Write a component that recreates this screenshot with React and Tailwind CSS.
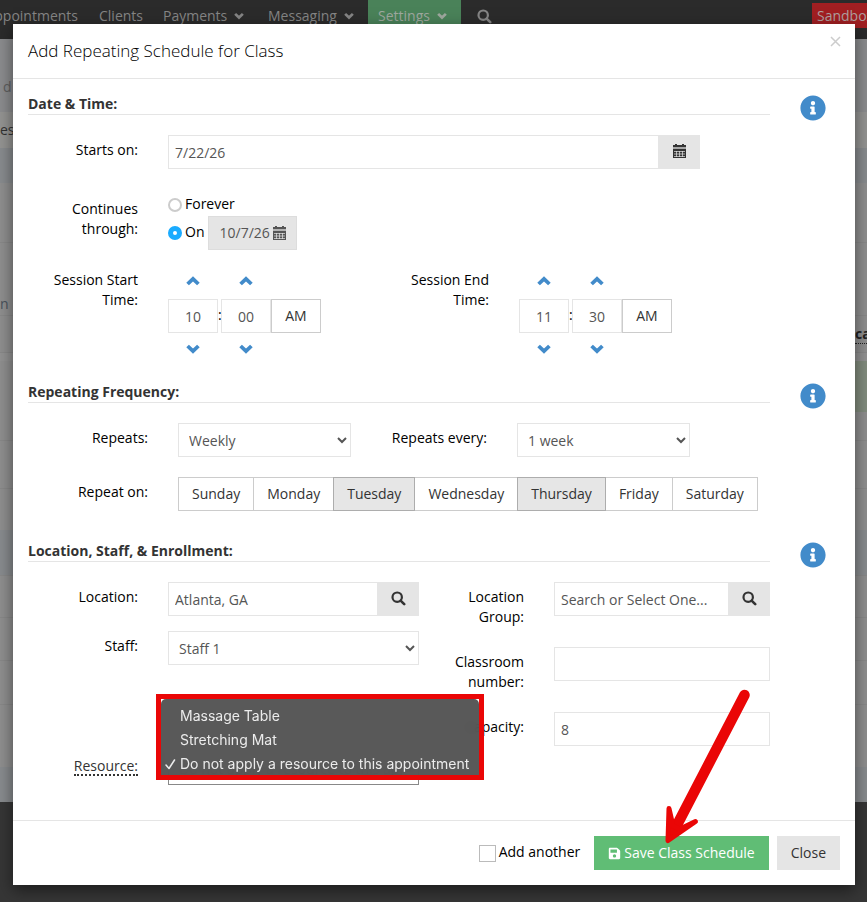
import React, { useState } from 'react';
import { FaInfoCircle, FaSave } from 'react-icons/fa';

const days = ['Sunday', 'Monday', 'Tuesday', 'Wednesday', 'Thursday', 'Friday', 'Saturday'];

// Rows of the page that sits behind the dialog
const pageRows = [
  { height: 'h-[73px]', tone: 'bg-[#8b8c8e]', left: 'd', pad: 'pl-[3px] pt-[22px] text-[#5f5f5f] items-center' },
  { height: 'h-9', tone: 'bg-[#949492]', left: 'es', pad: 'items-center text-[#333]' },
  { height: 'h-[35px]', tone: 'bg-[#888b8e]' },
  { height: 'h-[59px]', tone: 'bg-[#8f8f8f]' },
  { height: 'h-[73px]', tone: 'bg-[#8f8f8f] border-t border-[#888]', left: 'n', pad: 'items-end pb-px text-[#4a535c]' },
  { height: 'h-[37px]', tone: 'bg-[#8f8f8f] border-t border-[#888]', right: 'cat' },
  { height: 'h-[9px]', tone: 'bg-[#929292] border-t border-[#888]' },
  { height: 'h-[51px]', tone: 'bg-[#8f8f8f]', active: true },
  { height: 'h-[28px]', tone: 'bg-[#8f8f8f]' },
  { height: 'h-[48px]', tone: 'bg-[#8f8f8f] border-t border-[#888]' },
  { height: 'h-[42px]', tone: 'bg-[#8f8f8f] border-t border-[#888]' },
  { height: 'h-[45px]', tone: 'bg-[#888b8e]' },
  { height: 'h-[42px]', tone: 'bg-[#8f8f8f] border-t border-[#888]' },
  { height: 'h-[43px]', tone: 'bg-[#8f8f8f] border-t border-[#888]' },
  { height: 'h-[44px]', tone: 'bg-[#8f8f8f] border-t border-[#888]' },
  { height: 'h-[63px]', tone: 'bg-[#8f8f8f] border-t border-[#888]' },
  { height: 'h-[35px]', tone: 'bg-[#888b8e]' }
];

const Chevron = ({ up, className }) => (
  <svg viewBox="0 0 14 10" aria-hidden="true" className={className}>
    <path
      d={up ? 'M1.6 8 L7 2.8 L12.4 8' : 'M1.6 2 L7 7.2 L12.4 2'}
      fill="none"
      stroke="currentColor"
      strokeWidth="3.8"
    />
  </svg>
);

const SearchIcon = () => (
  <svg width="15" height="15" viewBox="0 0 15 15" aria-hidden="true">
    <circle cx="6.2" cy="6.2" r="4.7" fill="none" stroke="currentColor" strokeWidth="2.2" />
    <path d="M9.6 9.6 L13.2 13.2" stroke="currentColor" strokeWidth="2.6" strokeLinecap="round" />
  </svg>
);

const CalendarIcon = () => (
  <svg width="13" height="14" viewBox="0 0 13 14" aria-hidden="true">
    <path d="M0 1 H2 V0 H4 V1 H9 V0 H11 V1 H13 V3 H0 Z M0 5 H13 V14 H0 Z" fill="currentColor" />
    <path d="M0 3 H13 V5 H0 Z" fill="currentColor" opacity="0.35" />
    <path
      d="M1 7.5 H12 M1 10 H12 M1 12.5 H12 M3.5 7 V13 M6.5 7 V13 M9.5 7 V13"
      stroke="#e5e5e5"
      strokeWidth="0.7"
      fill="none"
    />
  </svg>
);

const NavBar = () => (
  <nav className="h-[39px] shrink-0 flex items-start bg-[#2b2b2b] text-[#858585] overflow-hidden">
    <div className="flex -ml-[23px]">
      <a href="#appointments" className="w-28 shrink-0 text-right pr-[11px] pt-1.5 h-[39px]">Appointments</a>
      <a href="#clients" className="w-16 px-2.5 pt-1.5">Clients</a>
      <a href="#payments" className="w-[105px] pl-2.5 pr-3.5 pt-1.5 flex justify-between">
        Payments
        <Chevron className="w-2.5 h-2 mt-1.5" />
      </a>
      <a href="#messaging" className="w-[110px] pl-2.5 pr-3.5 pt-1.5 flex justify-between">
        Messaging
        <Chevron className="w-2.5 h-2 mt-1.5" />
      </a>
      <a href="#settings" className="w-[93px] pl-2.5 pr-3.5 pt-1.5 flex justify-between bg-[#4a8259] text-[#9fa89f]">
        Settings
        <Chevron className="w-2.5 h-2 mt-1.5" />
      </a>
      <button type="button" aria-label="Search" className="h-8 pl-4">
        <SearchIcon />
      </button>
    </div>
    <div className="ml-auto mt-[3px] w-[55px] h-[25px] pl-[5px] pt-[3px] bg-[#a11f22] text-[#b0a0a0] overflow-hidden">
      Sandbox
    </div>
  </nav>
);

const PageBehind = () => (
  <div aria-hidden="true" className="absolute inset-0 flex flex-col overflow-hidden bg-[#363636]">
    <NavBar />
    {pageRows.map((row, idx) => (
      <div key={idx} className={`${row.height} ${row.tone} shrink-0 flex justify-between overflow-hidden`}>
        <div className={`w-3 flex ${row.pad || ''}`}>{row.left}</div>
        <div className={`w-3 overflow-hidden pt-2 ${row.active ? 'bg-[#828c7e]' : ''}`}>
          {row.right && <span className="font-bold text-[#222] border-b border-dotted border-[#222]">{row.right}</span>}
        </div>
      </div>
    ))}
  </div>
);

const Section = ({ title, className = '', children }) => (
  <section className={`grid grid-cols-[1fr_85px] pl-[15px] pt-[15px] ${className}`}>
    <div>
      <h2 className="font-bold text-[#333] border-b border-[#e5e5e5] mb-5">{title}</h2>
      {children}
    </div>
    <button type="button" aria-label={`About ${title}`} className="mt-px self-start justify-self-center text-[#428bca]">
      <FaInfoCircle size={26} />
    </button>
  </section>
);

const Row = ({ label, htmlFor, labelWidth = 'w-[110px]', className = '', children }) => (
  <div className={`flex gap-[30px] ${className}`}>
    <label htmlFor={htmlFor} className={`${labelWidth} shrink-0 pt-[5px] text-right`}>{label}</label>
    <div className="flex-1 min-w-0">{children}</div>
  </div>
);

const inputClass = 'w-full min-w-0 h-[34px] px-1.5 border border-[#e5e5e5] bg-white text-[#555]';
const selectClass = 'w-full h-[34px] pl-1.5 border border-[#e5e5e5] bg-white text-[#555]';

const InputWithButton = ({ id, value, buttonLabel, icon }) => (
  <div className="flex">
    <input id={id} type="text" defaultValue={value} className={inputClass} />
    <button
      type="button"
      aria-label={buttonLabel}
      className="w-[41px] h-[34px] shrink-0 flex items-center justify-center pb-0.5 bg-[#e5e5e5] text-[#333]"
    >
      {icon}
    </button>
  </div>
);

const TimePicker = ({ id, hour, minute }) => {
  const arrows = (up) => (
    <div className="h-[34px] pb-0.5 flex gap-[3px] items-center text-[#428bca]">
      <button type="button" aria-label={up ? 'Hour up' : 'Hour down'} className="w-[50px] flex justify-center">
        <Chevron up={up} className="w-3.5 h-2.5" />
      </button>
      <button type="button" aria-label={up ? 'Minute up' : 'Minute down'} className="w-[50px] flex justify-center">
        <Chevron up={up} className="w-3.5 h-2.5" />
      </button>
    </div>
  );

  return (
    <div>
      {arrows(true)}
      <div className="flex">
        <input
          id={id}
          type="text"
          defaultValue={hour}
          className="w-[50px] h-[34px] border border-[#e5e5e5] text-center text-[#555]"
        />
        <span className="w-[3px] pt-1.5">:</span>
        <input
          type="text"
          aria-label="Minute"
          defaultValue={minute}
          className="w-[50px] h-[34px] border border-[#e5e5e5] text-center text-[#555]"
        />
        <button type="button" className="w-[50px] h-[34px] border border-[#ccc] text-[#333]">AM</button>
      </div>
      {arrows(false)}
    </div>
  );
};

const ResourceMenu = () => (
  <div className="absolute -left-3 bottom-[5px] w-[328px] border-[5px] border-[#ea0606]">
    <ul
      role="listbox"
      aria-label="Resource options"
      className="h-[76px] pt-[5px] rounded-t-[5px] bg-[#525252]/96 backdrop-blur-xs text-[#ececec] font-[Inter,sans-serif] text-[14px] leading-6 whitespace-nowrap"
    >
      <li role="option" aria-selected="false" className="pl-[19px]">Massage Table</li>
      <li role="option" aria-selected="false" className="pl-[19px]">Stretching Mat</li>
      <li role="option" aria-selected="true" className="pl-1 flex items-center gap-1">
        <svg width="11" height="11" viewBox="0 0 11 11" aria-hidden="true">
          <path d="M1 6 L4 9.5 L9.5 1" fill="none" stroke="currentColor" strokeWidth="1.5" strokeLinecap="round" strokeLinejoin="round" />
        </svg>
        Do not apply a resource to this appointment
      </li>
    </ul>
  </div>
);

const radioClass = 'appearance-none w-3.5 h-3.5 rounded-full border-2 border-[#ccc] bg-white checked:border-[5px] checked:border-[#1aabff]';

const App = () => {
  const [selectedDays, setSelectedDays] = useState(['Tuesday', 'Thursday']);

  const toggleDay = (day) =>
    setSelectedDays(prev => (prev.includes(day) ? prev.filter(d => d !== day) : [...prev, day]));

  return (
    <div className="relative min-h-screen overflow-hidden pt-6 pb-[17px] pl-[13px] pr-3 font-['Open_Sans',sans-serif] text-[14px] leading-5 text-black">
      <PageBehind />

      <div role="dialog" aria-labelledby="dialog-title" className="relative bg-white shadow-[0_5px_15px_rgba(0,0,0,0.5)]">
        <header className="h-[55px] pl-[15px] pr-3.5 flex justify-between border-b border-[#e5e5e5]">
          <h1 id="dialog-title" className="text-[17px] leading-[54px] font-light">Add Repeating Schedule for Class</h1>
          <button type="button" aria-label="Close dialog" className="self-start mt-3 text-[#ccc]">
            <svg width="11" height="11" viewBox="0 0 11 11" aria-hidden="true">
              <path d="M1 1 L10 10 M10 1 L1 10" stroke="currentColor" strokeWidth="1.5" />
            </svg>
          </button>
        </header>

        <Section title="Date & Time:">
          <Row label="Starts on:" htmlFor="starts-on" className="mr-[70px]">
            <InputWithButton id="starts-on" value="7/22/26" buttonLabel="Pick start date" icon={<CalendarIcon />} />
          </Row>
          <Row label="Continues through:" htmlFor="through-on" className="mt-[25px]">
            <label className="flex gap-[3px]">
              <input type="radio" name="through" className={`${radioClass} mt-1`} />
              Forever
            </label>
            <div className="flex gap-1 mt-0.5">
              <label className="flex gap-[3px] pt-1.5">
                <input id="through-on" type="radio" name="through" defaultChecked className={`${radioClass} mt-1`} />
                On
              </label>
              <button
                type="button"
                className="h-[34px] px-2.5 flex items-center gap-[3px] border border-[#ddd] bg-[#e5e5e5] text-[#555]"
              >
                10/7/26
                <CalendarIcon />
              </button>
            </div>
          </Row>
          <div className="grid grid-cols-2 mr-10 mt-[15px]">
            <Row label="Session Start Time:" htmlFor="start-hour">
              <TimePicker id="start-hour" hour="10" minute="00" />
            </Row>
            <Row label="Session End Time:" htmlFor="end-hour">
              <TimePicker id="end-hour" hour="11" minute="30" />
            </Row>
          </div>
        </Section>

        <Section title="Repeating Frequency:" className="pb-[15px]">
          <div className="flex gap-4">
            <Row label="Repeats:" htmlFor="repeats" labelWidth="w-[120px]" className="w-[323px]">
              <select id="repeats" className={selectClass}>
                <option>Weekly</option>
              </select>
            </Row>
            <Row label="Repeats every:" htmlFor="repeats-every" labelWidth="w-[120px]" className="w-[323px]">
              <select id="repeats-every" className={selectClass}>
                <option>1 week</option>
              </select>
            </Row>
          </div>
          <div className="flex gap-[30px] mt-5">
            <span id="repeat-on" className="w-[120px] shrink-0 pt-[5px] text-right">Repeat on:</span>
            <div role="group" aria-labelledby="repeat-on" className="flex pl-px">
              {days.map(day => (
                <button
                  key={day}
                  type="button"
                  aria-pressed={selectedDays.includes(day)}
                  onClick={() => toggleDay(day)}
                  className={`h-[34px] px-[13px] -ml-px border text-[#333] ${
                    selectedDays.includes(day) ? 'relative bg-[#e6e6e6] border-[#adadad]' : 'bg-white border-[#ccc]'
                  }`}
                >
                  {day}
                </button>
              ))}
            </div>
          </div>
        </Section>

        <Section title="Location, Staff, & Enrollment:" className="pb-[35px]">
          <div className="flex gap-[15px]">
            <div className="flex-1 min-w-0">
              <Row label="Location:" htmlFor="location">
                <InputWithButton id="location" value="Atlanta, GA" buttonLabel="Search locations" icon={<SearchIcon />} />
              </Row>
              <Row label="Staff:" htmlFor="staff" className="mt-[15px]">
                <select id="staff" className={selectClass}>
                  <option>Staff 1</option>
                </select>
              </Row>
              <Row
                label={<span className="inline-block h-5 text-[#333] border-b-2 border-dotted border-[#333]">Resource:</span>}
                htmlFor="resource"
                className="mt-[86px]"
              >
                <div className="relative z-10">
                  <select id="resource" className="w-full h-[34px] pl-1.5 border border-[#888] bg-white text-[#555]">
                    <option>Do not apply a resource to this appointment</option>
                  </select>
                  <ResourceMenu />
                </div>
              </Row>
            </div>
            <div className="w-[336px] flex flex-col gap-5">
              <Row label="Location Group:" htmlFor="location-group" labelWidth="w-[90px]">
                <InputWithButton
                  id="location-group"
                  value="Search or Select One..."
                  buttonLabel="Search location groups"
                  icon={<SearchIcon />}
                />
              </Row>
              <Row label="Classroom number:" htmlFor="classroom" labelWidth="w-[90px]">
                <input id="classroom" type="text" className={inputClass} />
              </Row>
              <Row label="Capacity:" htmlFor="capacity" labelWidth="w-[90px]">
                <input id="capacity" type="text" defaultValue="8" className={inputClass} />
              </Row>
            </div>
          </div>
        </Section>

        <footer className="flex justify-end gap-2 p-[15px] border-t border-[#e5e5e5]">
          <label className="flex gap-[3px] pt-1.5 mr-1.5">
            <input type="checkbox" className="appearance-none w-[17px] h-[17px] mt-[3px] border border-[#bbb] bg-white checked:bg-[#1aabff]" />
            Add another
          </label>
          <button type="button" className="h-[34px] px-3.5 flex items-center gap-[3px] bg-[#60bd75] text-white">
            <FaSave size={13} />
            Save Class Schedule
          </button>
          <button type="button" className="h-[34px] px-3.5 bg-[#e5e5e5] text-[#333]">Close</button>
        </footer>

        {/* Arrow pointing at the save button */}
        <svg
          width="95"
          height="160"
          viewBox="0 0 95 160"
          aria-hidden="true"
          className="absolute right-[100px] bottom-[37px] z-20 pointer-events-none"
        >
          <path d="M84.500 7 L17 137" stroke="#ea0606" strokeWidth="10.500" strokeLinecap="round" />
          <path
            d="M8 152.500 L9 120.500 L13 138 L20 141 L35.500 133.500 Z"
            fill="#ea0606"
            stroke="#ea0606"
            strokeWidth="5"
            strokeLinejoin="round"
          />
        </svg>
      </div>
    </div>
  );
};

export default App;
